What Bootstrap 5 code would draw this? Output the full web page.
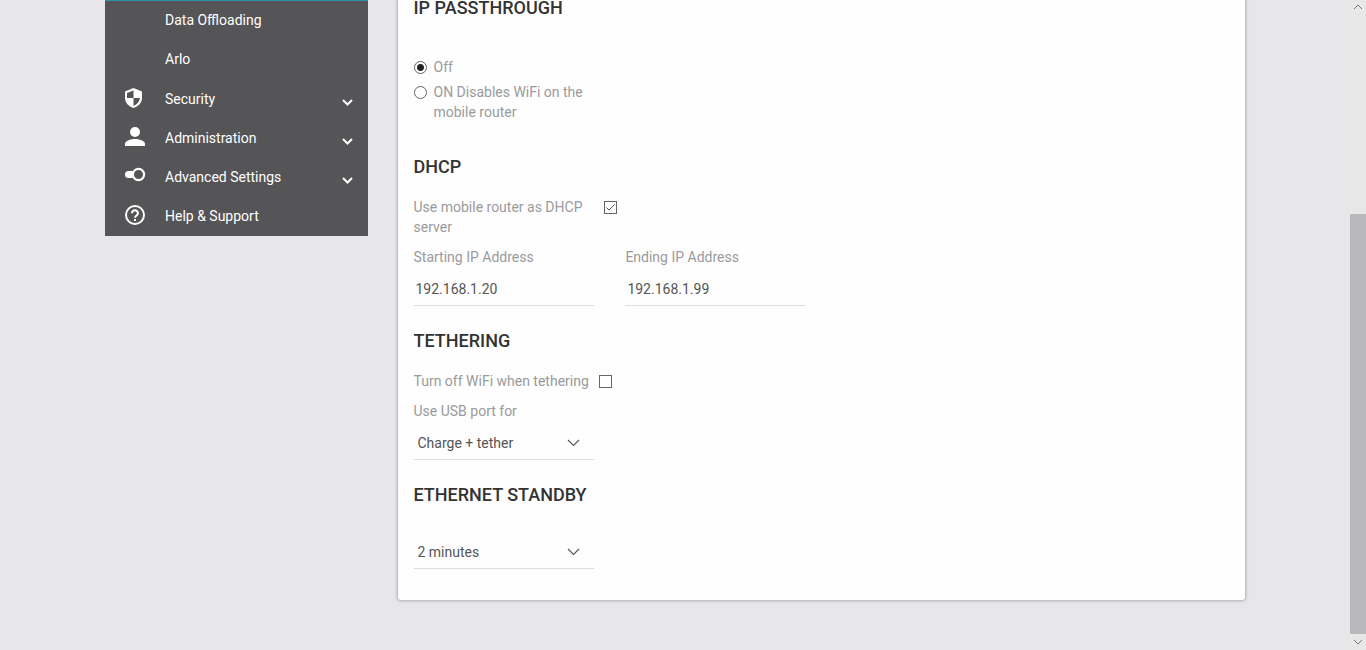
<!DOCTYPE html>
<html lang="en">
<head>
<meta charset="utf-8">
<meta name="viewport" content="width=device-width, initial-scale=1">
<title>Mobile Router Settings</title>
<link href="https://cdn.jsdelivr.net/npm/bootstrap@5.3.0/dist/css/bootstrap.min.css" rel="stylesheet">
<style>
  body { font-family: Roboto, "Liberation Sans", sans-serif; font-size: 14px; line-height: 20px; color: #9a9a9c; background: #e7e6e8; }
  .page-wrap { max-width: 1170px; --bs-gutter-x: 30px; }
  .page-row { --bs-gutter-x: 30px; }

  /* side menu */
  .side-menu { background: #555456; }
  .submenu { border-top: 1px solid #2f8fb5; padding-bottom: 1px; }
  .menu-link { height: 39px; padding: 0 14px 2px 19px; color: #fff; text-decoration: none; }
  .menu-link:hover { background: #626163; color: #fff; }
  .menu-icon { width: 22px; height: 22px; margin-right: 19px; fill: currentColor; }
  .menu-arrow { width: 13px; height: 13px; margin-top: 8px; }

  /* settings panel */
  .panel { background: #fefefe; border-radius: 0 0 3px 3px; box-shadow: 0 0 3px 1px rgba(0,0,0,.25); padding: 0 16px 31px; }
  .panel h2 { font-size: 18px; font-weight: 500; line-height: 16px; color: #333; margin: 0; }
  .panel section + section { margin-top: 27px; }
  .panel .first-group + section { margin-top: 37px; }
  .field-row { --bs-gutter-x: 32px; }
  .field { width: 180px; }
  .line-input { width: 180px; height: 33px; border: 0; border-bottom: 1px solid #dddce0; background-color: transparent; color: #555; padding: 0 2px; margin-top: 6px; border-radius: 0; outline: 0; }
  select.line-input { appearance: none; padding: 0 4px; background: url("data:image/svg+xml,%3Csvg xmlns='http://www.w3.org/2000/svg' width='13' height='8'%3E%3Cpath d='M1 1l5.500 5.500L12 1' fill='none' stroke='%23555' stroke-width='1.100'/%3E%3C/svg%3E") no-repeat right 14px center; }
  .tick, .dot { appearance: none; flex: none; width: 13px; height: 13px; margin: 4px 0 0; border: 1px solid #666; background: #fff center no-repeat; }
  .dot { border-radius: 50%; margin-right: 7px; }
  .dot:checked { background-image: radial-gradient(circle, #222 3px, transparent 4px); }
  .tick:checked { background-image: url("data:image/svg+xml,%3Csvg xmlns='http://www.w3.org/2000/svg' width='11' height='11'%3E%3Cpath d='M1.500 5.500l2.500 2.500L9.500 2.500' fill='none' stroke='%23555' stroke-width='1'/%3E%3C/svg%3E"); }
  .tick { margin-left: 10px; }
  .gap-choices { margin-top: 41px; }
  .gap-choice { margin-top: 5px; }
  .gap-standby { padding-top: 27px; }
  .gap-head { margin-top: 22px; }
  .gap-item { margin-top: 10px; }

  /* page scroll rail */
  .rail { width: 16px; background: #e8e8e9; color: #777; }
  .rail button { height: 16px; border: 0; padding: 0; background: none; color: inherit; line-height: 0; }
  .rail-thumb { background: #b9b8ba; flex: 420 0 0; }
  .rail-space { flex: 198 0 0; }
</style>
</head>
<body>
<div class="d-flex vh-100">
  <main class="flex-grow-1">
    <div class="container-fluid page-wrap">
      <div class="row page-row">
        <nav class="col-3" aria-label="Settings">
          <div class="side-menu">
            <div class="submenu">
              <a class="menu-link d-flex align-items-center" href="#"><span class="menu-icon"></span>Data Offloading</a>
              <a class="menu-link d-flex align-items-center" href="#"><span class="menu-icon"></span>Arlo</a>
            </div>
            <a class="menu-link d-flex align-items-center" href="#">
              <svg class="menu-icon" viewBox="0 0 22 22"><path d="M9.500 0L18 3.500V10c0 4.500-3.500 8.500-8.500 10C4.500 18.500 1 14.500 1 10V3.500z"/><path fill="#555456" d="M9.500 2.500V10H16c-.5 3.500-3 6.500-6.500 8v-8H3V5z"/></svg>
              <span class="flex-grow-1">Security</span>
              <svg class="menu-arrow" viewBox="0 0 13 13"><path d="M2 4l4.500 4.500L11 4" fill="none" stroke="#fff" stroke-width="2"/></svg>
            </a>
            <a class="menu-link d-flex align-items-center" href="#">
              <svg class="menu-icon" viewBox="0 0 22 22"><circle cx="11" cy="5" r="5"/><path d="M1 19v-2c0-3.500 6-5 10-5s10 1.500 10 5v2z"/></svg>
              <span class="flex-grow-1">Administration</span>
              <svg class="menu-arrow" viewBox="0 0 13 13"><path d="M2 4l4.500 4.500L11 4" fill="none" stroke="#fff" stroke-width="2"/></svg>
            </a>
            <a class="menu-link d-flex align-items-center" href="#">
              <svg class="menu-icon" viewBox="0 0 22 22"><path d="M4.500 5H10v7H4.500a3.500 3.500 0 0 1 0-7z"/><circle cx="14.500" cy="8.500" r="5.600" fill="#555456" stroke="#fff" stroke-width="2.200"/></svg>
              <span class="flex-grow-1">Advanced Settings</span>
              <svg class="menu-arrow" viewBox="0 0 13 13"><path d="M2 4l4.500 4.500L11 4" fill="none" stroke="#fff" stroke-width="2"/></svg>
            </a>
            <a class="menu-link d-flex align-items-center" href="#">
              <svg class="menu-icon" viewBox="0 0 22 22"><g fill="none" stroke="#fff" stroke-width="2"><circle cx="11" cy="10" r="9"/><path d="M8 8.300a3 3 0 1 1 6 0c0 2-3 2.300-3 4.400"/></g><path d="M10 14h2v2h-2z"/></svg>
              <span class="flex-grow-1">Help &amp; Support</span>
            </a>
          </div>
        </nav>

        <div class="col-9">
          <form class="panel">
            <section class="first-group">
              <h2>IP PASSTHROUGH</h2>
              <div class="d-flex gap-choices"><input class="dot" type="radio" name="pass" id="passOff" checked><label for="passOff">Off</label></div>
              <div class="d-flex field gap-choice"><input class="dot" type="radio" name="pass" id="passOn"><label for="passOn">ON Disables WiFi on the mobile router</label></div>
            </section>

            <section>
              <h2>DHCP</h2>
              <div class="d-flex gap-head">
                <label class="field" for="dhcp">Use mobile router as DHCP server</label>
                <input class="tick" type="checkbox" id="dhcp" checked>
              </div>
              <div class="row field-row gap-item">
                <div class="col-3"><label class="d-block" for="ipStart">Starting IP Address</label><input class="line-input" id="ipStart" type="text" value="192.168.1.20"></div>
                <div class="col-3"><label class="d-block" for="ipEnd">Ending IP Address</label><input class="line-input" id="ipEnd" type="text" value="192.168.1.99"></div>
              </div>
            </section>

            <section>
              <h2>TETHERING</h2>
              <div class="d-flex gap-head"><label for="wifiOff">Turn off WiFi when tethering</label><input class="tick" type="checkbox" id="wifiOff"></div>
              <div class="gap-item">
                <label class="d-block" for="usb">Use USB port for</label>
                <select class="line-input" id="usb"><option>Charge + tether</option><option>Charge only</option></select>
              </div>
            </section>

            <section>
              <h2>ETHERNET STANDBY</h2>
              <div class="gap-standby"><select class="line-input" id="standby" aria-label="Ethernet standby"><option>2 minutes</option><option>5 minutes</option></select></div>
            </section>
          </form>
        </div>
      </div>
    </div>
  </main>

  <div class="rail d-flex flex-column flex-shrink-0">
    <button type="button" aria-label="Scroll up"><svg width="16" height="16"><path d="M4 9l4-4 4 4" fill="none" stroke="currentColor"/></svg></button>
    <div class="rail-space"></div>
    <div class="rail-thumb"></div>
    <button type="button" aria-label="Scroll down"><svg width="16" height="16"><path d="M4 6l4 4 4-4" fill="none" stroke="currentColor"/></svg></button>
  </div>
</div>
<script src="https://cdn.jsdelivr.net/npm/bootstrap@5.3.0/dist/js/bootstrap.bundle.min.js"></script>
</body>
</html>
